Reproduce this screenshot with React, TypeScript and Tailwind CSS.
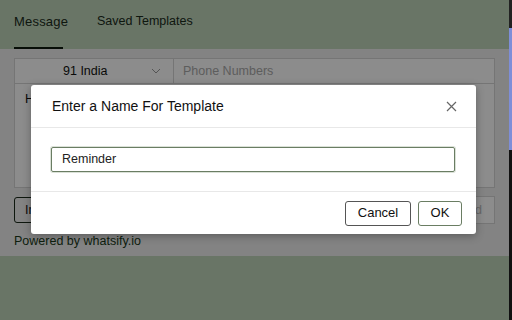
import React from "react";

export default function App() {
  return (
    <div
      className="relative w-[512px] h-[320px] overflow-hidden bg-[#bfd6ba] text-[#111]"
      style={{ fontFamily: '"Liberation Sans", Arial, sans-serif' }}
    >
      {/* underlying page */}
      <div className="flex flex-col h-[320px] w-[509px]">
        <div className="h-[49px] flex items-end px-[14px] gap-[34px] text-[13px]">
          <div className="pb-[16px] border-b-2 border-[#0d1a0d] text-[#1a2a1a] w-[49px] text-[13px] tracking-[0.2px]">Message</div>
          <div className="pb-[18px] text-[#1a2a1a] text-[12.5px]">Saved Templates</div>
        </div>
        <div className="h-[207px] bg-[#efefef] px-[14px] pt-[9px] flex flex-col">
          <div className="border border-[#d5d5d5] bg-white flex flex-col">
            <div className="flex h-[25px] border-b border-[#d5d5d5] text-[12.5px]">
              <div className="w-[159px] flex items-center justify-between pl-[48px] pr-[12px] border-r border-[#d5d5d5]">
                <span>91 India</span>
                <svg width="10" height="6" viewBox="0 0 10 6" fill="none" stroke="#999" strokeWidth="1">
                  <path d="M1 1l4 4 4-4" />
                </svg>
              </div>
              <div className="flex items-center pl-[9px] text-[#aaa]">Phone Numbers</div>
            </div>
            <div className="h-[103px] px-[10px] pt-[6px] text-[12.5px]">Hi</div>
          </div>
          <div className="flex justify-between mt-[9px]">
            <div className="h-[26px] px-[10px] border border-[#1a2a1a] rounded-[3px] flex items-center text-[12.5px]">Import</div>
            <div className="h-[28px] w-[90px] border border-[#d5d5d5] bg-white flex items-center justify-end pr-[12px] text-[12.5px] text-[#bbb] -mt-[1px]">Send</div>
          </div>
          <div className="mt-[8px] text-[12.5px] text-[#1a3a1a]">Powered by whatsify.io</div>
        </div>
      </div>

      {/* right edge strip */}
      <div className="absolute right-0 top-0 w-[3px] h-[320px] flex flex-col">
        <div className="h-[28px] bg-[#222]" />
        <div className="h-[122px] bg-[#7e8ed8]" />
        <div className="flex-1 bg-[#111]" />
      </div>

      {/* backdrop */}
      <div className="absolute left-0 top-0 w-[509px] h-[320px] bg-[rgba(0,0,0,0.45)]" />

      {/* modal */}
      <div className="absolute left-[31px] top-[85px] w-[445px] h-[149px] bg-white rounded-[3px] shadow-[0_2px_8px_rgba(0,0,0,0.3)] flex flex-col">
        <div className="h-[43px] flex items-center justify-between pl-[21px] pr-[19px] border-b border-[#e8e8e8]">
          <span className="text-[14px] text-[#111]">Enter a Name For Template</span>
          <svg width="11" height="11" viewBox="0 0 11 11" stroke="#666" strokeWidth="1.2">
            <path d="M1 1l9 9M10 1l-9 9" />
          </svg>
        </div>
        <div className="h-[64px] flex items-center px-[20px] border-b border-[#e8e8e8]">
          <div className="w-[404px] h-[25px] border border-[#6a7d63] rounded-[2px] shadow-[0_0_0_1px_rgba(150,170,140,0.35)] flex items-center pl-[10px] text-[12.5px] text-[#222]">
            Reminder
          </div>
        </div>
        <div className="flex-1 flex items-center justify-end gap-[7px] px-[14px]">
          <div className="h-[25px] w-[66px] border border-[#555] rounded-[3px] flex items-center justify-center text-[13px] text-[#111]">Cancel</div>
          <div className="h-[25px] w-[44px] border border-[#6a7d63] rounded-[3px] flex items-center justify-center text-[13px] text-[#111]">OK</div>
        </div>
      </div>
    </div>
  );
}
